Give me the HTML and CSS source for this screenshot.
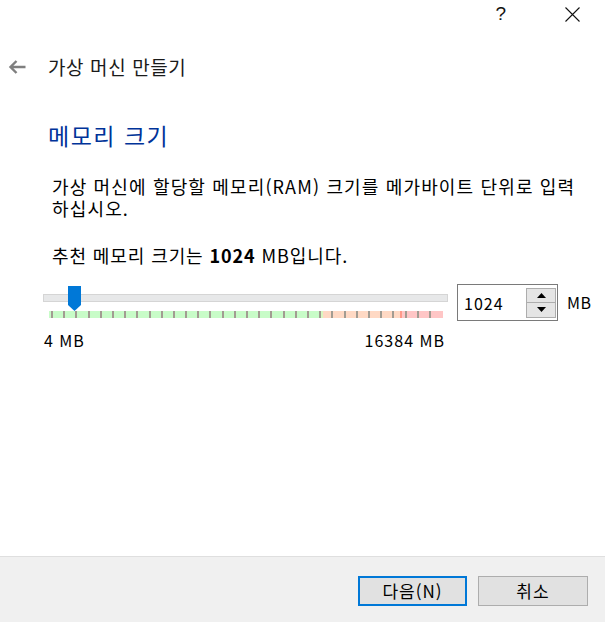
FILE: index.html
```html
<!DOCTYPE html>
<html lang="ko">
<head>
<meta charset="utf-8">
<title>가상 머신 만들기</title>
<link rel="stylesheet" href="styles.css">
</head>
<body>
<div class="dialog">
  <div class="titlebar">
    <span class="help">?</span>
    <span class="close">
      <svg width="15" height="15" viewBox="0 0 15 15"><path d="M0.5 0.5 L14.5 14.5 M14.5 0.5 L0.5 14.5" stroke="#111" stroke-width="1.1" fill="none"/></svg>
    </span>
  </div>
  <div class="nav">
    <svg class="back" width="18" height="14" viewBox="0 0 18 14"><path d="M17.5 7 H2.5 M8.5 1 L2.5 7 L8.5 13" stroke="#7f7f7f" stroke-width="2.4" fill="none"/></svg>
    <span class="nav-title">가상 머신 만들기</span>
  </div>
  <main class="page">
    <h1 class="heading">메모리 크기</h1>
    <p class="desc">가상 머신에 할당할 메모리(RAM) 크기를 메가바이트 단위로 입력<br>하십시오.</p>
    <p class="recommend">추천 메모리 크기는 <b>1024</b> MB입니다.</p>
    <div class="memory-row">
      <div class="slider">
        <div class="track"></div>
        <div class="thumb"></div>
        <div class="ticks"></div>
        <div class="scale-labels"><span>4 MB</span><span>16384 MB</span></div>
      </div>
      <div class="spinbox">
        <span class="spin-value">1024</span>
        <div class="spin-buttons">
          <span class="spin-btn"><svg width="9" height="5" viewBox="0 0 9 5"><path d="M0 5 L4.5 0 L9 5 Z" fill="#000"/></svg></span>
          <span class="spin-btn"><svg width="9" height="5" viewBox="0 0 9 5"><path d="M0 0 L4.5 5 L9 0 Z" fill="#000"/></svg></span>
        </div>
      </div>
      <span class="unit">MB</span>
    </div>
  </main>
  <footer class="footer">
    <button class="btn btn-primary">다음(N)</button>
    <button class="btn">취소</button>
  </footer>
</div>
</body>
</html>
```
FILE: styles.css
```css
html, body {
  margin: 0;
  padding: 0;
  background: #ffffff;
}
body {
  font-family: "Noto Sans CJK KR", "Noto Sans", sans-serif;
  color: #000;
}
.dialog {
  width: 605px;
  height: 622px;
  display: flex;
  flex-direction: column;
  overflow: hidden;
}
.titlebar {
  height: 40px;
  display: flex;
  align-items: center;
  justify-content: flex-end;
  padding-right: 25px;
  gap: 59px;
  box-sizing: border-box;
  padding-bottom: 12px;
}
.help {
  font-family: "Liberation Sans", sans-serif;
  font-size: 19px;
  font-weight: 300;
  color: #111;
  line-height: 20px;
}
.close {
  display: flex;
  width: 15px;
  height: 15px;
}
.nav {
  height: 54px;
  display: flex;
  align-items: center;
  padding-left: 8px;
  gap: 22px;
}
.back {
  display: block;
}
.nav-title {
  font-size: 19px;
  line-height: 24px;
  color: #1a1a1a;
  letter-spacing: 0.6px;
}
.page {
  flex: 1;
  display: flex;
  flex-direction: column;
  padding-left: 43px;
}
.heading {
  margin: 26px 0 0 5px;
  font-size: 23px;
  line-height: 30px;
  font-weight: 400;
  color: #003399;
  letter-spacing: 1.5px;
}
.desc {
  margin: 25px 0 0 9px;
  font-size: 18px;
  line-height: 22px;
  letter-spacing: 1.15px;
}
.recommend {
  margin: 25px 0 0 9px;
  font-size: 18px;
  line-height: 22px;
  letter-spacing: 0.9px;
}
.recommend b {
  font-weight: 700;
}
.memory-row {
  margin-top: 18px;
  display: flex;
  align-items: flex-start;
}
.slider {
  position: relative;
  width: 405px;
  padding-top: 10px;
}
.track {
  height: 8px;
  box-sizing: border-box;
  background: #e7e8e9;
  border: 1px solid #d5d5d5;
}
.thumb {
  position: absolute;
  left: 25px;
  top: 2px;
  width: 13px;
  height: 25px;
  background: #0078d7;
  clip-path: polygon(0 0, 100% 0, 100% 19px, 50% 25px, 0 19px);
}
.ticks {
  margin: 9px 5px 0 6px;
  height: 7px;
  background:
    repeating-linear-gradient(to right, transparent 0 2px, #a29c92 2px 4px, transparent 4px 12.19px) 0 0 / 382px 100% no-repeat,
    linear-gradient(to right, #c8fcc8 0 270px, #d8f8c0 270px 274px, #ffd9c4 274px 351px, #ff9a8a 351px 353px, #ffc6c6 353px 100%);
}
.scale-labels {
  display: flex;
  justify-content: space-between;
  margin: 13px 3px 0 1px;
  font-size: 16px;
  line-height: 18px;
  letter-spacing: 1px;
}
.spinbox {
  margin-left: 9px;
  width: 101px;
  height: 37px;
  box-sizing: border-box;
  border: 1px solid #7a7a7a;
  display: flex;
  align-items: center;
  padding: 2px 1px 2px 6px;
}
.spin-value {
  flex: 1;
  font-size: 16px;
  line-height: 20px;
  letter-spacing: 1px;
}
.spin-buttons {
  width: 30px;
  height: 30px;
  display: flex;
  flex-direction: column;
}
.spin-btn {
  flex: 1;
  display: flex;
  align-items: center;
  justify-content: center;
  background: #e5e5e5;
  border: 1px solid #adadad;
}
.spin-btn + .spin-btn {
  border-top: none;
}
.unit {
  margin-left: 9px;
  font-size: 16px;
  line-height: 37px;
  letter-spacing: 0.5px;
}
.footer {
  height: 66px;
  box-sizing: border-box;
  background: #f0f0f0;
  border-top: 1px solid #dfdfdf;
  display: flex;
  justify-content: flex-end;
  align-items: flex-start;
  padding: 19px 17px 0 0;
  gap: 11px;
}
.btn {
  width: 110px;
  height: 30px;
  box-sizing: border-box;
  background: #e1e1e1;
  border: 1px solid #adadad;
  font-family: "Noto Sans CJK KR", "Noto Sans", sans-serif;
  font-size: 17px;
  letter-spacing: 1px;
  color: #000;
  padding: 0;
  line-height: 26px;
}
.btn-primary {
  width: 109px;
  border: 2px solid #0078d7;
}
```
